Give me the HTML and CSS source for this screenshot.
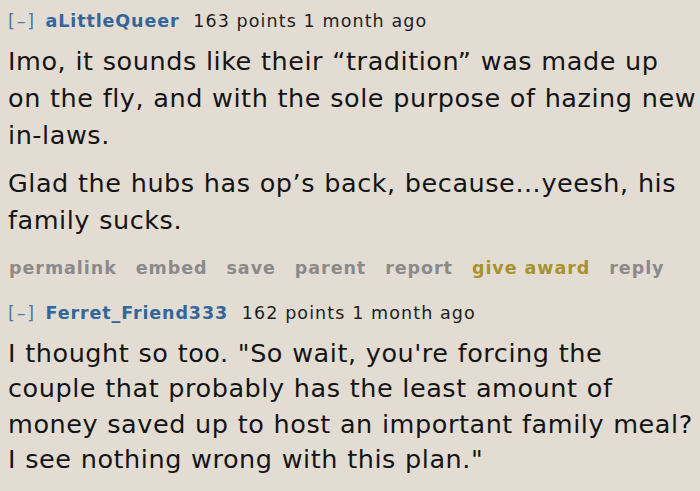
FILE: index.html
```html
<!DOCTYPE html>
<html lang="en">
<head>
    <meta charset="UTF-8">
    <title>comments</title>
    <link rel="stylesheet" href="styles.css">
</head>
<body>
    <div class="comment">
        <p class="tagline">
            <a class="expand">[–]</a>
            <a class="author">aLittleQueer</a>
            <span class="score">163 points 1 month ago</span>
        </p>
        <div class="md">
            <p>Imo, it sounds like their “tradition” was made up on the fly, and with the sole purpose of hazing new in-laws.</p>
            <p>Glad the hubs has op’s back, because…yeesh, his family sucks.</p>
        </div>
        <ul class="buttons">
            <li>permalink</li>
            <li>embed</li>
            <li>save</li>
            <li>parent</li>
            <li>report</li>
            <li class="gold">give award</li>
            <li>reply</li>
        </ul>
    </div>

    <div class="comment child">
        <p class="tagline">
            <a class="expand">[–]</a>
            <a class="author">Ferret_Friend333</a>
            <span class="score">162 points 1 month ago</span>
        </p>
        <div class="md tight">
            <p>I thought so too. "So wait, you're forcing the couple that probably has the least amount of money saved up to host an important family meal? I see nothing wrong with this plan."</p>
        </div>
    </div>
</body>
</html>
```

FILE: styles.css
```css
body {
    margin: 0;
    padding: 0 0 0 8px;
    background: #e3dcd3;
    font-family: 'DejaVu Sans', Verdana, sans-serif;
    color: #141414;
    overflow: hidden;
}

.comment {
    width: 692px;
}

.child {
    padding-top: 21px;
}

.tagline {
    margin: 0;
    padding-top: 9px;
    font-size: 17.5px;
    line-height: 24px;
    letter-spacing: 1.1px;
    color: #1e1e1e;
}

.comment.child .tagline {
    padding-top: 0;
}

.expand {
    color: #4a78a8;
    letter-spacing: 1.8px;
    margin-right: 3px;
}

.author {
    color: #336699;
    font-weight: bold;
    letter-spacing: 0.9px;
    margin-right: 7px;
}

.md {
    font-size: 25.5px;
    line-height: 37.2px;
    letter-spacing: 0.55px;
    word-spacing: 0.5px;
}

.md p {
    margin: 10px 0 0;
}

.tight {
    width: 687px;
    line-height: 35.3px;
}

.tight p {
    margin-top: 11px;
}

.buttons {
    list-style: none;
    margin: 17px 0 0;
    padding: 0 0 0 1px;
    display: flex;
    gap: 19px;
    font-size: 17.5px;
    line-height: 24px;
    font-weight: bold;
    letter-spacing: 0.95px;
    color: #8a8a8a;
}

.buttons .gold {
    color: #a8922e;
}
```
